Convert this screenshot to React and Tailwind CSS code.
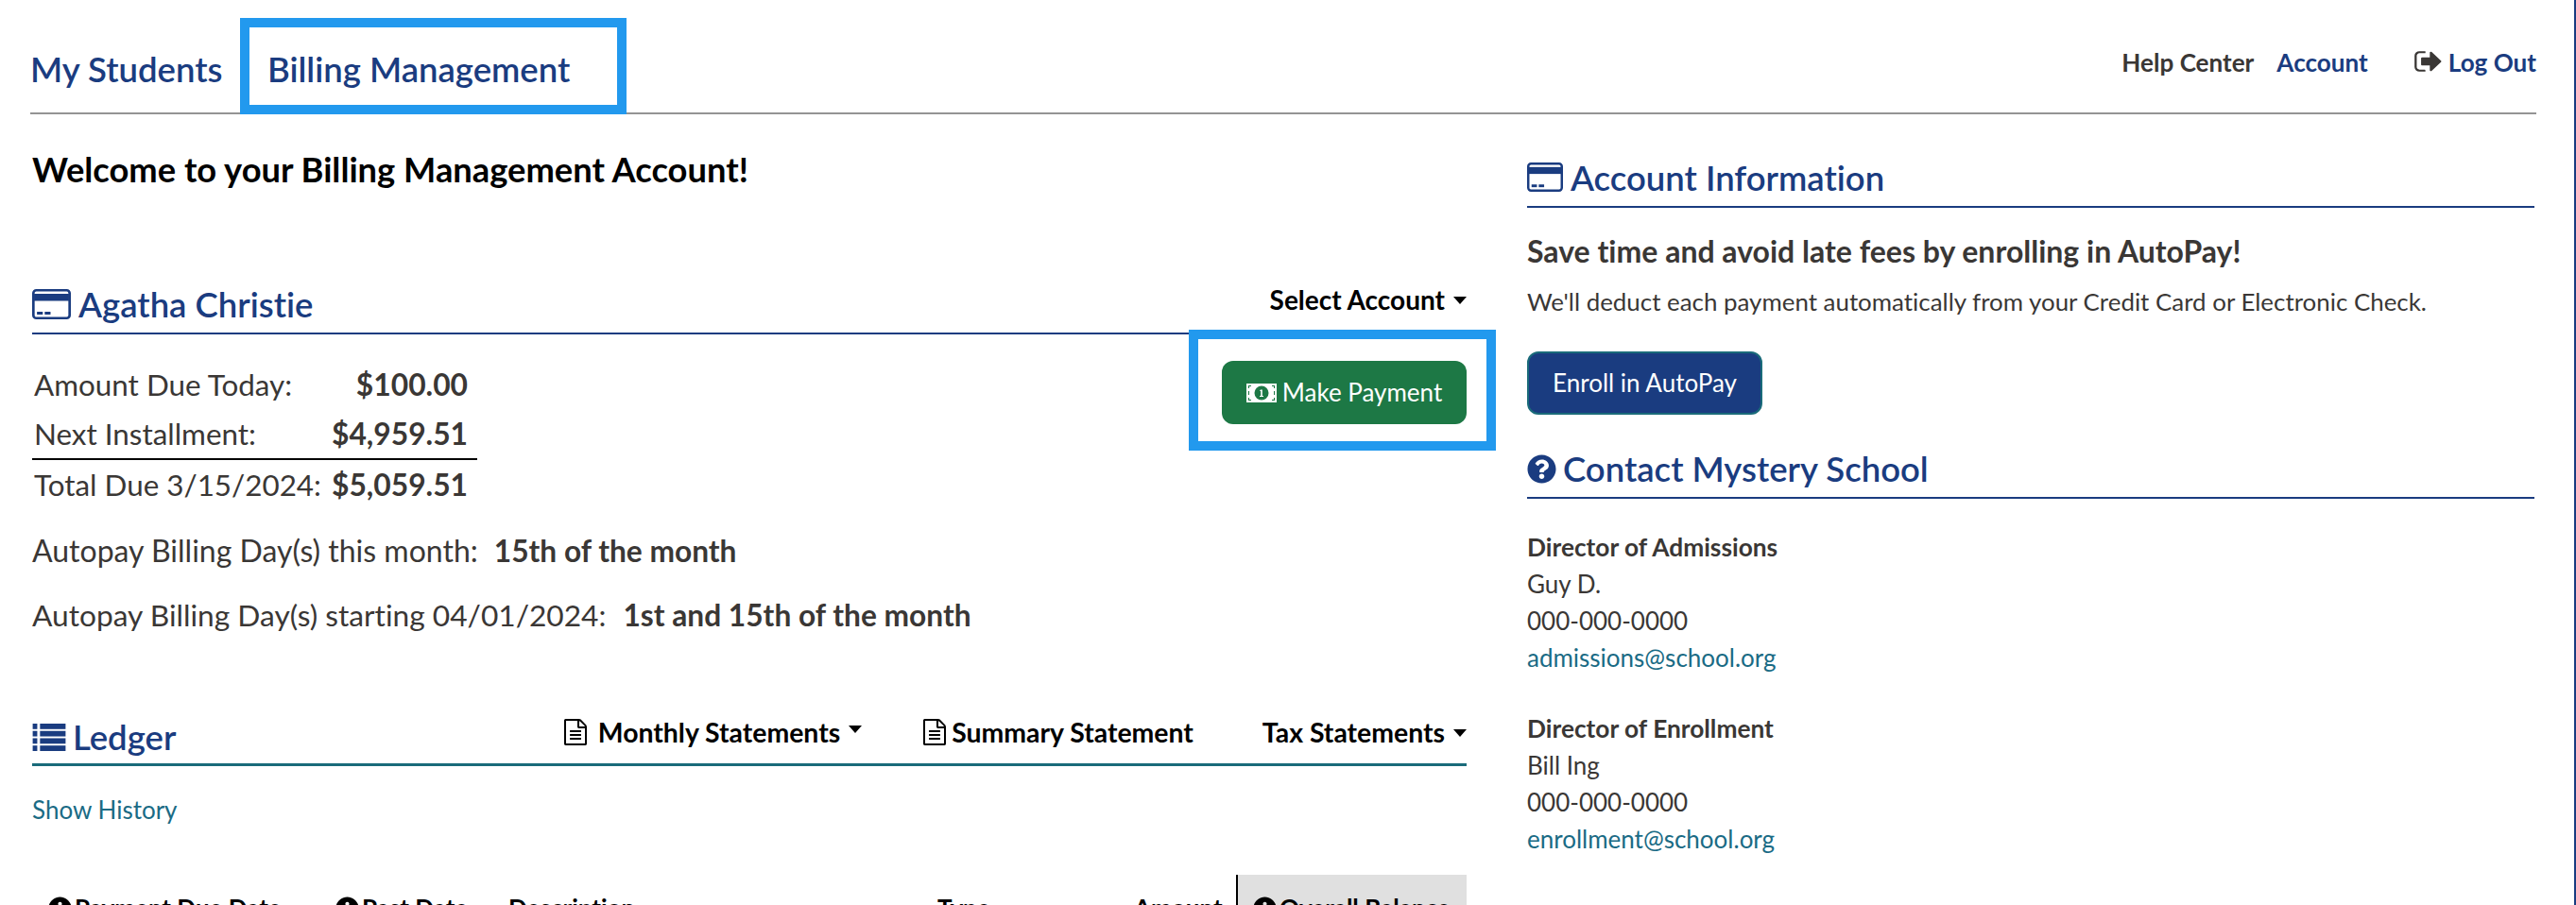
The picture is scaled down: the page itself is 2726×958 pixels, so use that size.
import { FaInfoCircle, FaQuestionCircle } from "react-icons/fa";

const NAVY = "text-[#1a3c80]";

function CardIcon({ className }) {
  return (
    <svg viewBox="0 0 40 32" className={className} preserveAspectRatio="none">
      <rect x="1.3" y="1.3" width="37.4" height="29.4" rx="3" fill="none" stroke="currentColor" strokeWidth="2.6" />
      <rect x="2" y="5" width="36" height="7.5" fill="currentColor" />
      <rect x="5" y="24" width="6" height="3" fill="currentColor" />
      <rect x="13" y="24" width="6" height="3" fill="currentColor" />
    </svg>
  );
}

function ListIcon({ className }) {
  const rows = [0, 8, 16, 24];
  return (
    <svg viewBox="0 0 36 30" className={className} fill="currentColor">
      {rows.map((y) => (
        <g key={y}>
          <rect x="0" y={y} width="5" height="6" />
          <rect x="8" y={y} width="28" height="6" />
        </g>
      ))}
    </svg>
  );
}

function FileIcon({ className }) {
  return (
    <svg viewBox="128 0 1536 1792" className={className} fill="currentColor" preserveAspectRatio="none">
      <path d="M1596 380q28 28 48 76t20 88v1152q0 40-28 68t-68 28h-1344q-40 0-68-28t-28-68v-1600q0-40 28-68t68-28h896q40 0 88 20t76 48zm-444-244v376h376q-10-29-22-41l-313-313q-12-12-41-22zm384 1528v-1024h-416q-40 0-68-28t-28-68v-416h-768v1536h1280zm-1024-864q0-14 9-23t23-9h704q14 0 23 9t9 23v64q0 14-9 23t-23 9h-704q-14 0-23-9t-9-23v-64zm736 224q14 0 23 9t9 23v64q0 14-9 23t-23 9h-704q-14 0-23-9t-9-23v-64q0-14 9-23t23-9h704zm0 256q14 0 23 9t9 23v64q0 14-9 23t-23 9h-704q-14 0-23-9t-9-23v-64q0-14 9-23t23-9h704z" />
    </svg>
  );
}

function LogOutIcon({ className }) {
  return (
    <svg viewBox="0 128 1664 1536" className={className} fill="currentColor" preserveAspectRatio="none">
      <path d="M704 1440q0 4 1 20t.5 26.5-3 23.5-10 19.5-20.5 6.5h-320q-119 0-203.5-84.5t-84.5-203.5v-704q0-119 84.5-203.5t203.5-84.5h320q13 0 22.5 9.5t9.5 22.5q0 4 1 20t.5 26.5-3 23.5-10 19.5-20.5 6.5h-320q-66 0-113 47t-47 113v704q0 66 47 113t113 47h288l11.5 1 11.5 3 8 5.5 7 9 2 13.5zm928-544q0 26-19 45l-544 544q-19 19-45 19t-45-19-19-45v-288h-448q-26 0-45-19t-19-45v-384q0-26 19-45t45-19h448v-288q0-26 19-45t45-19 45 19l544 544q19 19 19 45z" />
    </svg>
  );
}

function MoneyIcon({ className }) {
  return (
    <svg viewBox="0 0 32 20" className={className}>
      <rect width="32" height="20" fill="#fff" />
      <circle cx="16" cy="10" r="7.5" fill="#1d7845" />
      <path d="M15 6.5h1.8v6.5h1.2v1h-4v-1h1.2V8h-1.2z" fill="#fff" />
      <path d="M2 2h3v1H3v2H2zM27 2h3v3h-1V3h-2zM2 15h1v2h2v1H2zM29 15h1v3h-3v-1h2zM2 8h1v4H2zM29 8h1v4h-1z" fill="#1d7845" />
    </svg>
  );
}

function Caret() {
  return <span className="inline-block ml-[9px] w-0 h-0 border-x-[7px] border-x-transparent border-t-[8px] border-t-current align-middle relative top-[-3px]"></span>;
}

function Highlight() {
  return <span className="absolute inset-0 border-[10px] border-[#2299ee] pointer-events-none"></span>;
}

function Amount({ label, value, rule }) {
  return (
    <tr className={rule ? "border-b-2 border-black" : ""}>
      <td className="pl-[2px] pr-[11px] whitespace-nowrap text-[31.4px]">{label}</td>
      <td className="pr-[10px] text-right font-bold text-[31.8px]">{value}</td>
    </tr>
  );
}

function Contact({ title, name, phone, email }) {
  return (
    <div className="text-[26px] leading-[39px] text-[#3a3735]">
      <div className="font-bold text-[26.3px]">{title}</div>
      <div>{name}</div>
      <div>{phone}</div>
      <a className="text-[#1a6b85]">{email}</a>
    </div>
  );
}

function HeaderCell({ info, children, className }) {
  return (
    <div className={`h-[60px] pt-[17px] ${className}`}>
      <div className="flex items-center">
        {info && <FaInfoCircle className="w-[25px] h-[25px] mr-[3px]" />}
        <span>{children}</span>
      </div>
    </div>
  );
}

export default function App() {
  return (
    <div className="h-screen overflow-hidden bg-white pl-8 pr-[40px] border-r-2 border-[#1a3c80] font-[family-name:Lato,sans-serif] [font-variant-ligatures:none] text-[#3a3735]">
      <nav className="h-[121px] border-b-2 border-[#949494] flex justify-between">
        <div className={`flex ${NAVY} text-[36.5px] font-semibold`}>
          <a className="pt-[48px] w-[222px] leading-[50px]">My Students</a>
          <a className="relative mt-[19px] pt-[29px] pl-[29px] w-[409px] h-[102px] leading-[50px]">
            Billing Management
            <Highlight />
          </a>
        </div>
        <div className="flex text-[26.1px] font-bold pt-[48px] leading-[36px]">
          <a className="mr-[24px]">Help Center</a>
          <a className={`${NAVY} mr-[48px]`}>Account</a>
          <a className={`${NAVY} flex items-center h-[36px]`}>
            <LogOutIcon className="w-[30px] h-[26px] mr-[7px] text-[#3a3735] -mt-[3px]" />
            Log Out
          </a>
        </div>
      </nav>

      <div className="flex gap-[64px] pl-[2px]">
        <main className="w-[1518px] shrink-0">
          <h1 className="text-[36.3px] font-bold text-black leading-[40px] mt-[38px]">Welcome to your Billing Management Account!</h1>

          <div className="flex justify-between items-end h-[56px] mt-[99px] border-b-2 border-[#1a3c80]">
            <h2 className={`flex items-center text-[36.5px] font-semibold leading-[50px] mb-[5px] ${NAVY}`}>
              <CardIcon className="w-[41px] h-[32px] mr-[8px]" />
              Agatha Christie
            </h2>
            <div className="text-[28px] font-bold text-black leading-[36px] mb-[17px]">Select Account<Caret /></div>
          </div>

          <div className="flex justify-between">
            <table className="text-[32px] leading-[52px] mt-[27px] border-collapse">
              <tbody>
                <Amount label="Amount Due Today:" value="$100.00" />
                <Amount label="Next Installment:" value="$4,959.51" rule />
                <Amount label="Total Due 3/15/2024:" value="$5,059.51" />
              </tbody>
            </table>
            <div className="relative -mr-[31px] mt-[-5px] w-[325px] h-[128px] pl-[35px] pt-[33px]">
              <button className="flex items-center justify-center w-[259px] h-[67px] rounded-[12px] bg-[#1d7845] text-white text-[26px]">
                <MoneyIcon className="w-[32px] h-[20px] mr-[6px]" />
                Make Payment
              </button>
              <Highlight />
            </div>
          </div>

          <p className="text-[32px] leading-[40px] mt-[24px]">Autopay Billing Day(s) this month:<b className="ml-[17px] font-bold text-[31.7px]">15th of the month</b></p>
          <p className="text-[31.7px] leading-[40px] mt-[28px]">Autopay Billing Day(s) starting 04/01/2024:<b className="ml-[18px] font-bold">1st and 15th of the month</b></p>

          <div className="flex justify-between items-end h-[62px] mt-[78px] border-b-[3px] border-[#1a6b7a] text-black">
            <h2 className={`flex items-center text-[36.5px] font-semibold leading-[50px] mb-[3px] ${NAVY}`}>
              <ListIcon className="w-[36px] h-[29px] mr-[7px]" />
              Ledger
            </h2>
            <div className="flex text-[28.4px] font-bold leading-[36px] mb-[15px]">
              <span className="flex items-center"><FileIcon className="w-[24px] h-[28px] mr-[12px]" />Monthly Statements<Caret /></span>
              <span className="flex items-center ml-[65px]"><FileIcon className="w-[24px] h-[28px] mr-[6px]" />Summary Statement</span>
              <span className="ml-[73px]">Tax Statements<Caret /></span>
            </div>
          </div>

          <a className="block text-[26px] leading-[36px] mt-[28px] text-[#1a6b85]">Show History</a>

          <div className="flex mt-[51px] text-[26px] font-bold text-black leading-[36px]">
            <HeaderCell info className="pl-[17px] w-[321px]">Payment Due Date</HeaderCell>
            <HeaderCell info className="w-[183px]">Past Date</HeaderCell>
            <HeaderCell className="w-[454px]">Description</HeaderCell>
            <HeaderCell className="w-[208px]">Type</HeaderCell>
            <HeaderCell className="w-[108px]">Amount</HeaderCell>
            <HeaderCell info className="flex-1 border-l-2 border-black bg-[#e0e0e0] pl-[16px]">Overall Balance</HeaderCell>
          </div>
        </main>

        <aside className="flex-1 mr-[2px]">
          <h2 className={`flex items-center h-[99px] pt-[36px] border-b-2 border-[#1a3c80] text-[36.5px] font-semibold leading-[50px] ${NAVY}`}>
            <CardIcon className="w-[38px] h-[31px] mr-[8px]" />
            Account Information
          </h2>
          <p className="text-[32px] font-bold leading-[40px] mt-[26px]">Save time and avoid late fees by enrolling in AutoPay!</p>
          <p className="text-[25.9px] leading-[36px] mt-[15px]">We'll deduct each payment automatically from your Credit Card or Electronic Check.</p>
          <button className="block w-[249px] h-[67px] mt-[35px] rounded-[12px] bg-[#1a3c80] border-2 border-[#1a6b7a] text-white text-[26px]">Enroll in AutoPay</button>
          <h2 className={`flex items-center h-[89px] pt-[27px] border-b-2 border-[#1a3c80] text-[36.5px] font-semibold leading-[50px] ${NAVY}`}>
            <FaQuestionCircle className="w-[31px] h-[31px] mr-[7px]" />
            Contact Mystery School
          </h2>
          <div className="mt-[32px] flex flex-col gap-[36px]">
            <Contact title="Director of Admissions" name="Guy D." phone="000-000-0000" email="admissions@school.org" />
            <Contact title="Director of Enrollment" name="Bill Ing" phone="000-000-0000" email="enrollment@school.org" />
          </div>
        </aside>
      </div>
    </div>
  );
}
